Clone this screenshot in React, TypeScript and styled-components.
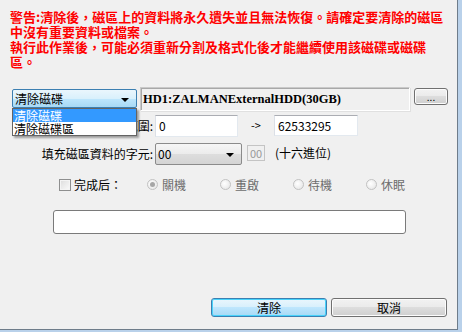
import React from "react";
import styled, { createGlobalStyle } from "styled-components";

const GlobalStyle = createGlobalStyle`
  html, body {
    margin: 0;
    padding: 0;
    background: #b9d1ea;
  }
  * {
    box-sizing: border-box;
  }
`;

const UI_FONT = `"Noto Sans CJK TC", "Noto Sans", sans-serif`;

const Frame = styled.div`
  width: 462px;
  height: 332px;
  background: #b9d1ea;
  font-family: ${UI_FONT};
  font-size: 12px;
  color: #000;
`;

const Panel = styled.div`
  position: relative;
  width: 458px;
  height: 330px;
  background: #f0f0f0;
  border-right: 1px solid #6e7c8a;
  border-bottom: 1px solid #6e7c8a;
  display: flex;
  flex-direction: column;
  overflow: hidden;
`;

const Warning = styled.div`
  margin-top: 9px;
  padding-left: 10px;
  height: 60px;
  color: #ff0000;
  font-weight: bold;
  font-size: 13px;
  line-height: 15px;
  white-space: nowrap;
  flex-shrink: 0;
`;

const Row = styled.div<{ $top: number; $left?: number; $height: number }>`
  display: flex;
  align-items: flex-start;
  margin-top: ${(p) => p.$top}px;
  padding-left: ${(p) => p.$left ?? 0}px;
  height: ${(p) => p.$height}px;
  flex-shrink: 0;
`;

const ComboWrap = styled.div`
  position: relative;
  z-index: 2;
  margin-top: 2px;
`;

const Combo = styled.div<{ $w: number; $h: number; $focus?: boolean }>`
  display: flex;
  align-items: center;
  justify-content: space-between;
  width: ${(p) => p.$w}px;
  height: ${(p) => p.$h}px;
  padding: 0 7px 0 2px;
  border: 1px solid ${(p) => (p.$focus ? "#3c7fb1" : "#8b8b8b")};
  border-radius: 2px;
  background: ${(p) =>
    p.$focus
      ? "linear-gradient(#eaf6fd 0%, #d9f0fc 50%, #bee6fd 51%, #a7d9f5 100%)"
      : "linear-gradient(#f6f6f6 0%, #ebebeb 50%, #dddddd 51%, #d4d4d4 100%)"};
  font-size: 12px;
  line-height: 14px;
`;

const Arrow = styled.span`
  width: 0;
  height: 0;
  border-left: 4px solid transparent;
  border-right: 4px solid transparent;
  border-top: 4px solid #000;
  margin-top: 2px;
`;

const DropList = styled.div`
  position: absolute;
  left: 0;
  top: 100%;
  width: 125px;
  padding: 0;
  background: #fff;
  border: 1px solid #646464;
  box-shadow: 2px 2px 2px rgba(0, 0, 0, 0.35);
`;

const DropItem = styled.div<{ $active?: boolean }>`
  height: 13px;
  line-height: 13px;
  padding-left: 1px;
  font-size: 12px;
  background: ${(p) => (p.$active ? "#3399ff" : "#fff")};
  color: ${(p) => (p.$active ? "#fff" : "#000")};
`;

const DiskField = styled.div`
  margin-left: 3px;
  width: 270px;
  height: 24px;
  border: 1px solid #c9c9c9;
  border-right-color: #fff;
  border-bottom-color: #fff;
  box-shadow: inset 1px 1px 0 #a8a8a8, 1px 1px 0 #e0e0e0;
  padding-left: 2px;
  display: flex;
  align-items: center;
  font-family: "Liberation Serif", serif;
  font-weight: bold;
  font-size: 12.5px;
  white-space: nowrap;
`;

const Button = styled.button<{ $w: number; $h: number; $primary?: boolean }>`
  width: ${(p) => p.$w}px;
  height: ${(p) => p.$h}px;
  padding: 0;
  border: 1px solid ${(p) => (p.$primary ? "#3c7fb1" : "#707070")};
  border-radius: 3px;
  box-shadow: inset 0 0 0 1px ${(p) => (p.$primary ? "#48d3fb" : "#fcfcfc")};
  background: ${(p) =>
    p.$primary
      ? "linear-gradient(#eaf6fd 0%, #d9f0fc 45%, #bee6fd 50%, #a7d9f5 100%)"
      : "linear-gradient(#f2f2f2 0%, #ebebeb 45%, #dddddd 50%, #cfcfcf 100%)"};
  font-family: ${UI_FONT};
  font-size: 12px;
  line-height: 14px;
  color: #000;
`;

const DotsButton = styled(Button)`
  margin-left: 4px;
  margin-top: 1px;
  font-size: 10px;
`;

const Label = styled.div<{ $w: number }>`
  width: ${(p) => p.$w}px;
  text-align: right;
  padding-right: 2px;
  line-height: 22px;
  white-space: nowrap;
`;

const TextBox = styled.div<{ $w: number; $h: number }>`
  width: ${(p) => p.$w}px;
  height: ${(p) => p.$h}px;
  background: #fff;
  border: 1px solid #e3e9ef;
  border-top-color: #abadb3;
  border-left-color: #dbdfe6;
  padding: 2px 3px;
  font-size: 12px;
  line-height: 15px;
`;

const Arrowed = styled.div`
  width: 36px;
  text-align: center;
  line-height: 20px;
  font-size: 11px;
`;

const SmallBox = styled.div`
  margin: 2px 0 0 5px;
  width: 18px;
  height: 16px;
  border: 1px solid #c4c4c4;
  color: #9a9a9a;
  font-size: 11px;
  line-height: 14px;
  text-align: center;
  background: #f0f0f0;
`;

const Hint = styled.div`
  margin-left: 10px;
  line-height: 20px;
`;

const CheckBox = styled.span`
  display: inline-block;
  width: 12px;
  height: 12px;
  border: 1px solid #8e8f8f;
  background: linear-gradient(135deg, #dcdcdc, #fbfbfb);
  box-shadow: inset 0 0 0 1px #f4f4f4;
`;

const CheckLabel = styled.span`
  margin-left: 3px;
  line-height: 13px;
`;

const Radio = styled.span<{ $checked?: boolean }>`
  position: relative;
  display: inline-block;
  width: 11px;
  height: 11px;
  border-radius: 50%;
  border: 1px solid #c2c2c2;
  background: radial-gradient(circle at 40% 40%, #ffffff, #e2e2e2);
  &::after {
    content: "";
    display: ${(p) => (p.$checked ? "block" : "none")};
    position: absolute;
    left: 2px;
    top: 2px;
    width: 5px;
    height: 5px;
    border-radius: 50%;
    background: #a6a6a6;
  }
`;

const RadioItem = styled.div`
  width: 73px;
  display: flex;
  align-items: center;
  gap: 4px;
  color: #6d6d6d;
  line-height: 13px;
`;

const Options = styled.div`
  margin-left: 25px;
  display: flex;
`;

const CheckWrap = styled.div`
  display: flex;
  align-items: center;
`;

const Progress = styled.div`
  margin-top: 19px;
  margin-left: 53px;
  width: 353px;
  height: 24px;
  background: #fff;
  border: 1px solid #7a7a7a;
  border-radius: 3px;
  flex-shrink: 0;
`;

const Footer = styled.div`
  margin-top: 64px;
  padding-right: 10px;
  display: flex;
  justify-content: flex-end;
  gap: 4px;
`;

const radios = [
  { label: "關機", checked: true },
  { label: "重啟" },
  { label: "待機" },
  { label: "休眠" },
];

export default function App() {
  return (
    <Frame>
      <GlobalStyle />
      <Panel>
        <Warning>
          <div>警告:清除後，磁區上的資料將永久遺失並且無法恢復。請確定要清除的磁區</div>
          <div>中沒有重要資料或檔案。</div>
          <div>執行此作業後，可能必須重新分割及格式化後才能繼續使用該磁碟或磁碟</div>
          <div>區。</div>
        </Warning>

        <Row $top={18} $left={12} $height={24}>
          <ComboWrap>
            <Combo $w={125} $h={19} $focus>
              <span>清除磁碟</span>
              <Arrow />
            </Combo>
            <DropList>
              <DropItem $active>清除磁碟</DropItem>
              <DropItem>清除磁碟區</DropItem>
            </DropList>
          </ComboWrap>
          <DiskField>HD1:ZALMANExternalHDD(30GB)</DiskField>
          <DotsButton $w={34} $h={17}>
            ...
          </DotsButton>
        </Row>

        <Row $top={4} $height={22}>
          <Label $w={155}>磁區範圍:</Label>
          <TextBox $w={83} $h={22}>0</TextBox>
          <Arrowed>-&gt;</Arrowed>
          <TextBox $w={84} $h={21}>62533295</TextBox>
        </Row>

        <Row $top={6} $height={22}>
          <Label $w={155}>填充磁區資料的字元:</Label>
          <Combo $w={87} $h={22}>
            <span>00</span>
            <Arrow />
          </Combo>
          <SmallBox>00</SmallBox>
          <Hint>(十六進位)</Hint>
        </Row>

        <Row $top={13} $left={59} $height={13}>
          <CheckWrap>
            <CheckBox />
            <CheckLabel>完成后：</CheckLabel>
          </CheckWrap>
          <Options>
            {radios.map((r) => (
              <RadioItem key={r.label}>
                <Radio $checked={r.checked} />
                {r.label}
              </RadioItem>
            ))}
          </Options>
        </Row>

        <Progress />

        <Footer>
          <Button $w={116} $h={19} $primary>
            清除
          </Button>
          <Button $w={116} $h={19}>
            取消
          </Button>
        </Footer>
      </Panel>
    </Frame>
  );
}
